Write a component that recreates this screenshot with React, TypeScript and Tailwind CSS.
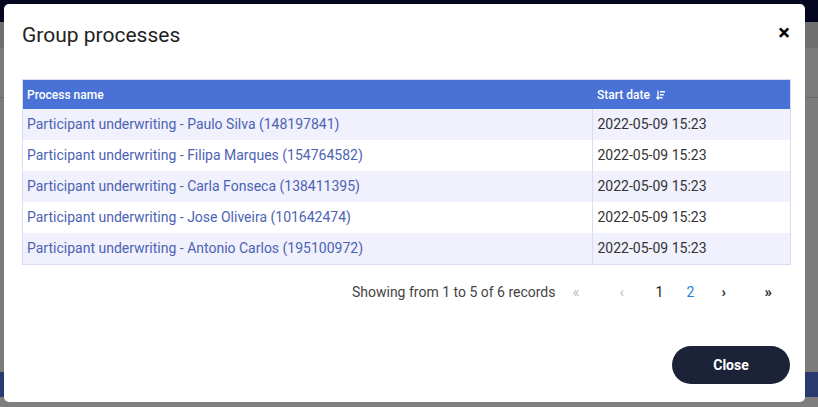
import React from "react";

const rows = [
  { name: "Participant underwriting - Paulo Silva (148197841)", date: "2022-05-09 15:23" },
  { name: "Participant underwriting - Filipa Marques (154764582)", date: "2022-05-09 15:23" },
  { name: "Participant underwriting - Carla Fonseca (138411395)", date: "2022-05-09 15:23" },
  { name: "Participant underwriting - Jose Oliveira (101642474)", date: "2022-05-09 15:23" },
  { name: "Participant underwriting - Antonio Carlos (195100972)", date: "2022-05-09 15:23" },
];

const SortIcon = () => (
  <svg width="9" height="10" viewBox="0 0 9 10" className="inline-block ml-[6px]">
    <path d="M2 0.5v8M0.5 7l1.5 2 1.5-2" stroke="white" strokeWidth="1.3" fill="none" />
    <rect x="4" y="1" width="5" height="1.5" fill="white" />
    <rect x="4" y="4" width="3.8" height="1.5" fill="white" />
    <rect x="4" y="7" width="2.5" height="1.5" fill="white" />
  </svg>
);

const App = () => {
  return (
    <div className="relative w-[818px] h-[407px] overflow-hidden bg-[#7b7b7b] font-['Roboto',sans-serif]">
      {/* dimmed page behind */}
      <div className="h-[22px] bg-[#050720]" />
      <div className="h-[26px] bg-[#6f6f6f]" />
      <div className="h-[50px] bg-[#7b7b7b] border-b border-[#6a6a6a]" />
      <div className="h-[274px] bg-[#7b7b7b]" />
      <div className="h-[25px] bg-[#283a6e]" />
      <div className="h-[10px] bg-[#7f7f7f]" />

      {/* modal */}
      <div className="absolute left-[4px] top-[4px] w-[801px] h-[398px] bg-white rounded-[5px] flex flex-col">
        <div className="flex items-start justify-between pl-[18px] pr-[15px] pt-[19px]">
          <h2 className="text-[21px] font-normal text-[#222] leading-[24px]">Group processes</h2>
          <button className="text-[22px] font-bold text-black leading-none -mt-[1px]">×</button>
        </div>

        <div className="ml-[18px] mr-[14px] mt-[32px] border border-[#d8ddf6]">
          <table className="w-full border-collapse text-left">
            <thead>
              <tr className="bg-[#4a72d6] text-white text-[12px] font-medium h-[29px]">
                <th className="pl-[4px] font-medium">Process name</th>
                <th className="pl-[5px] w-[198px] font-medium">
                  Start date
                  <SortIcon />
                </th>
              </tr>
            </thead>
            <tbody className="text-[14px]">
              {rows.map((r, i) => (
                <tr key={i} className={`h-[31px] ${i % 2 === 0 ? "bg-[#f0f1fc]" : "bg-white"}`}>
                  <td className="pl-[4px] text-[#4c63b4]">{r.name}</td>
                  <td className="pl-[5px] text-[#333] border-l border-[#d8ddf6]">{r.date}</td>
                </tr>
              ))}
            </tbody>
          </table>
        </div>

        <div className="flex items-center justify-end mt-[16px] pr-[33px] text-[14px] text-[#444]">
          <span className="mr-[17px]">Showing from 1 to 5 of 6 records</span>
          <span className="text-[#bbb] text-[15px] w-[47px]">«</span>
          <span className="text-[#bbb] text-[15px] w-[36px]">‹</span>
          <span className="text-[#222] w-[31px]">1</span>
          <span className="text-[#2a7fd4] w-[35px]">2</span>
          <span className="text-[#222] text-[15px] font-bold w-[43px]">›</span>
          <span className="text-[#222] text-[15px] font-bold">»</span>
        </div>

        <div className="mt-auto mb-[18px] flex justify-end pr-[15px]">
          <button className="w-[118px] h-[38px] rounded-full bg-[#1c2238] text-white text-[14px] font-bold">
            Close
          </button>
        </div>
      </div>
    </div>
  );
};

export default App;
